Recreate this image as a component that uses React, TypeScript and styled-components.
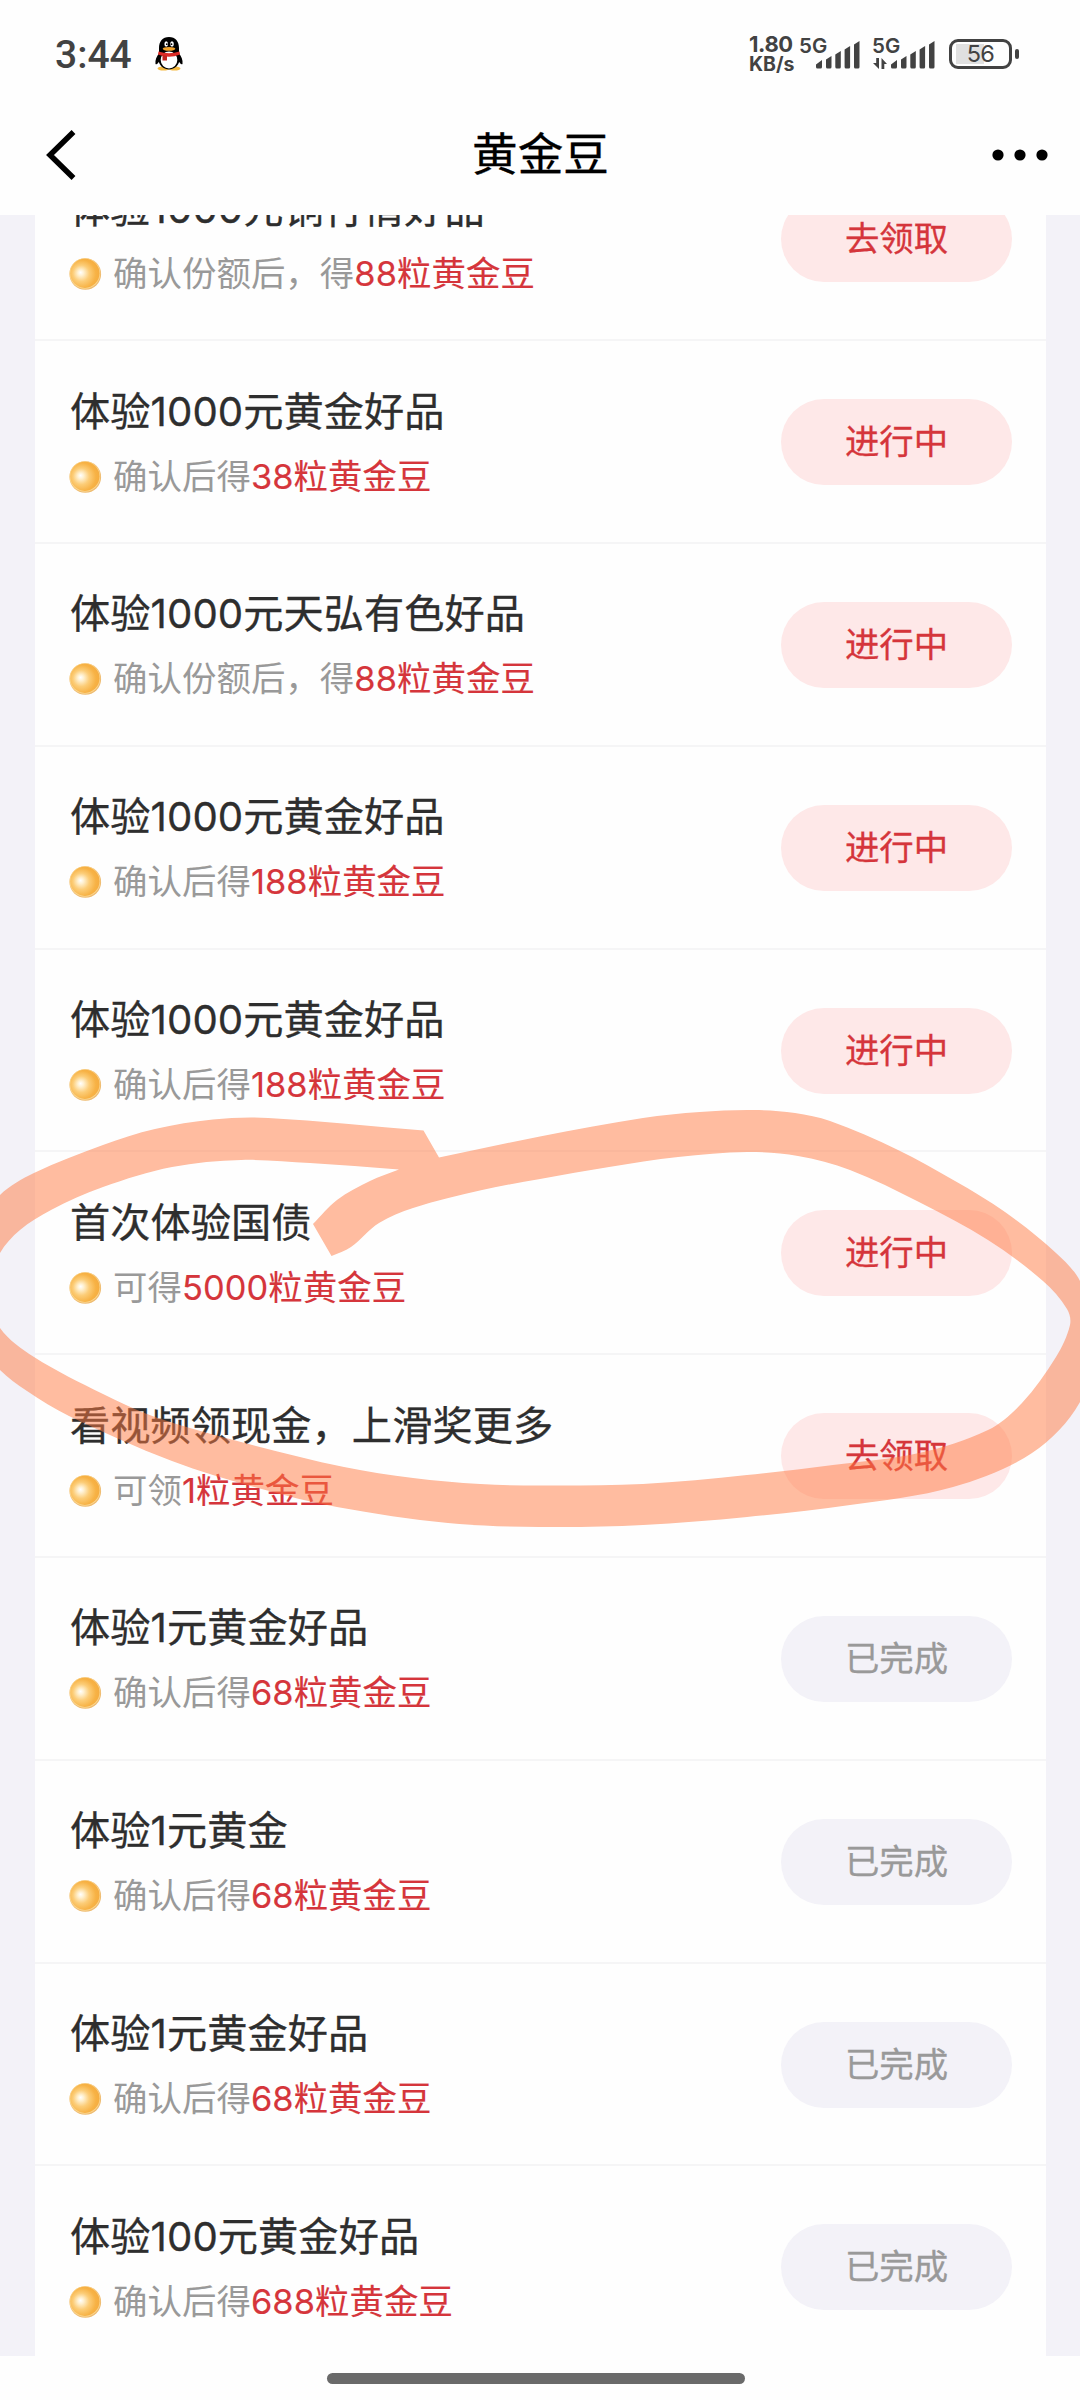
import React from 'react';
import styled, { createGlobalStyle } from 'styled-components';

type Pt = [number, number];
type Status = 'claim' | 'doing' | 'done';

interface Task {
  title: string;
  hint: string;
  reward: string;
  status: Status;
}

const tasks: Task[] = [
  { title: '体验1000元铜行情好品', hint: '确认份额后，得', reward: '88粒黄金豆', status: 'claim' },
  { title: '体验1000元黄金好品', hint: '确认后得', reward: '38粒黄金豆', status: 'doing' },
  { title: '体验1000元天弘有色好品', hint: '确认份额后，得', reward: '88粒黄金豆', status: 'doing' },
  { title: '体验1000元黄金好品', hint: '确认后得', reward: '188粒黄金豆', status: 'doing' },
  { title: '体验1000元黄金好品', hint: '确认后得', reward: '188粒黄金豆', status: 'doing' },
  { title: '首次体验国债', hint: '可得', reward: '5000粒黄金豆', status: 'doing' },
  { title: '看视频领现金，上滑奖更多', hint: '可领', reward: '1粒黄金豆', status: 'claim' },
  { title: '体验1元黄金好品', hint: '确认后得', reward: '68粒黄金豆', status: 'done' },
  { title: '体验1元黄金', hint: '确认后得', reward: '68粒黄金豆', status: 'done' },
  { title: '体验1元黄金好品', hint: '确认后得', reward: '68粒黄金豆', status: 'done' },
  { title: '体验100元黄金好品', hint: '确认后得', reward: '688粒黄金豆', status: 'done' },
];

const statusLabel: Record<Status, string> = { claim: '去领取', doing: '进行中', done: '已完成' };

const GlobalStyle = createGlobalStyle`
  * { box-sizing: border-box; }
  body {
    margin: 0;
    background: #fefefe;
    font-family: Inter, 'Noto Sans CJK SC', sans-serif;
  }
`;

const Screen = styled.div`
  position: relative;
  display: flex;
  flex-direction: column;
  width: 1080px;
  height: 2400px;
  overflow: hidden;
  background: #fefefe;
`;

const StatusBar = styled.div`
  display: flex;
  align-items: center;
  justify-content: space-between;
  height: 108px;
  padding: 0 61px 0 55px;
  color: #424242;
`;

const StatusGroup = styled.div`
  display: flex;
  align-items: center;
`;

const Clock = styled.span`
  width: 100px;
  padding-top: 1px;
  font-family: Roboto, sans-serif;
  font-size: 39px;
  font-weight: 500;
  line-height: 44px;
`;

const Speed = styled.div`
  display: flex;
  flex-direction: column;
  width: 51px;
  font-size: 19.5px;
  font-weight: 700;
  line-height: 20px;
  white-space: nowrap;
`;

const SpeedValue = styled.span`
  font-size: 22px;
  line-height: 20px;
  letter-spacing: -0.4px;
`;

const Cell = styled.div<{ $width: number }>`
  position: relative;
  width: ${(p) => p.$width}px;
  height: 36px;
`;

const CellLabel = styled.span`
  position: absolute;
  top: 0;
  left: -1px;
  font-size: 20.5px;
  font-weight: 600;
  line-height: 19px;
`;

const CellBars = styled.svg`
  position: absolute;
  left: 0;
  top: 0;
  fill: #424242;
`;

const Battery = styled.div`
  display: flex;
  align-items: center;
  justify-content: center;
  width: 63px;
  height: 30px;
  border: 3px solid #424242;
  border-radius: 9px;
  background: linear-gradient(#e0e0e0, #e0e0e0) 4px 2px / 28px 20px no-repeat;
  font-size: 23.5px;
  letter-spacing: -0.8px;
  line-height: 24px;
`;

const BatteryNub = styled.div`
  width: 4px;
  height: 10px;
  margin-left: 3px;
  border-radius: 2px;
  background: #424242;
`;

const TitleBar = styled.header`
  display: grid;
  grid-template-columns: 100px 1fr 100px;
  align-items: center;
  height: 107px;
  padding: 0 31px 14px 45px;
`;

const PageTitle = styled.h1`
  margin: 0;
  padding: 0 13px 0 0;
  color: #000;
  font-size: 45.6px;
  font-weight: 400;
  line-height: 60px;
  text-align: center;
  -webkit-text-stroke: 0.3px #000;
`;

const DotsIcon = styled.svg`
  justify-self: end;
`;

const Viewport = styled.main`
  flex: none;
  height: 2141px;
  padding: 0 34px 0 35px;
  overflow: hidden;
  background: #f3f2f8;
`;

const List = styled.div`
  margin-top: -76.5px;
  background: #fefefe;
`;

const Row = styled.div`
  display: flex;
  align-items: center;
  justify-content: space-between;
  height: 202.8px;
  padding: 1px 34px 0 34px;
  border-bottom: 2px solid #f5f5f6;
`;

const Info = styled.div`
  display: flex;
  flex-direction: column;
  gap: 13px;
`;

const TaskTitle = styled.div`
  padding-left: 1px;
  color: #2e2e2e;
  font-size: 40.2px;
  line-height: 56px;
  letter-spacing: 0.08px;
  white-space: nowrap;
  -webkit-text-stroke: 0.3px #2e2e2e;
`;

const Hint = styled.div`
  display: flex;
  align-items: center;
  color: #999;
  font-size: 34.4px;
  line-height: 48px;
  letter-spacing: 0.08px;
  white-space: nowrap;
`;

const CoinIcon = styled.svg`
  flex: none;
  margin-right: 11px;
`;

const Reward = styled.span`
  color: #d5353b;
  -webkit-text-stroke: 0.15px #d5353b;
`;

const Pill = styled.button<{ $done: boolean }>`
  width: 231px;
  height: 86px;
  padding: 0;
  border: 0;
  border-radius: 43px;
  background: ${(p) => (p.$done ? '#f3f2f8' : '#fee8e8')};
  color: ${(p) => (p.$done ? '#999' : '#d5353b')};
  font-family: inherit;
  font-size: 34.4px;
  line-height: 50px;
  -webkit-text-stroke: 0.3px currentColor;
`;

const NavArea = styled.div`
  display: flex;
  justify-content: center;
  height: 44px;
  padding-top: 17px;
`;

const HomeBar = styled.div`
  width: 418px;
  height: 11px;
  margin-right: 8px;
  border-radius: 6px;
  background: #6a6a6a;
`;

const Marker = styled.svg`
  position: absolute;
  left: 0;
  top: 0;
  pointer-events: none;
`;

/* Smooth curve through the points, as a run of cubic segments. */
function curve(points: Pt[]): string {
  const out: string[] = [];
  for (let i = 0; i < points.length - 1; i++) {
    const a = points[Math.max(0, i - 1)];
    const b = points[i];
    const c = points[i + 1];
    const d = points[Math.min(points.length - 1, i + 2)];
    const len = Math.hypot(c[0] - b[0], c[1] - b[1]);
    const t1 = Math.hypot(c[0] - a[0], c[1] - a[1]) || 1;
    const t2 = Math.hypot(d[0] - b[0], d[1] - b[1]) || 1;
    const k = len / 3;
    const x1 = b[0] + ((c[0] - a[0]) / t1) * k;
    const y1 = b[1] + ((c[1] - a[1]) / t1) * k;
    const x2 = c[0] - ((d[0] - b[0]) / t2) * k;
    const y2 = c[1] - ((d[1] - b[1]) / t2) * k;
    out.push(`C${x1.toFixed(1)} ${y1.toFixed(1)} ${x2.toFixed(1)} ${y2.toFixed(1)} ${c[0]} ${c[1]}`);
  }
  return out.join('');
}

const outerEdge: Pt[] = [
  [439, 1157.5], [540, 1136.5], [643, 1118], [700, 1112], [753, 1110], [795, 1113], [830, 1121], [898, 1150],
  [955, 1181], [1005, 1212], [1056, 1253], [1080, 1281], [1098, 1335], [1080, 1402], [1032, 1453],
  [953, 1487], [850, 1505], [747, 1517], [643, 1525], [540, 1527], [448, 1523], [337, 1507],
  [258, 1488], [172, 1461], [69, 1416], [27, 1391], [0, 1370], [-45, 1320], [-45, 1250], [0, 1195],
  [34, 1173], [103, 1145], [155, 1129], [213, 1119.5], [268, 1118], [423.5, 1130.5],
];

const innerEdge: Pt[] = [
  [399, 1169.5], [310, 1163], [241, 1160], [172, 1167], [103, 1187], [51, 1210], [20, 1230], [0, 1253],
  [-14, 1290], [0, 1328], [34, 1357], [103, 1394], [155, 1417], [241, 1442], [344, 1467], [413, 1478],
  [480, 1484], [540, 1485.5], [643, 1484], [747, 1475], [833, 1465], [919, 1453], [988, 1430],
  [1022, 1403], [1056, 1357], [1070, 1325], [1067, 1309], [1043, 1281], [988, 1240], [919, 1202],
  [850, 1170], [798, 1156], [747, 1152], [678, 1157], [609, 1167], [540, 1179], [482, 1190],
  [413, 1208], [379, 1223], [351, 1247], [331.5, 1256],
];

const tailEdge: Pt[] = [[313, 1224], [337, 1200], [370, 1181], [399, 1169.5]];

const markerPath =
  `M439 1157.5${curve(outerEdge)}Z` +
  `M399 1169.5${curve(innerEdge)}L313 1224${curve(tailEdge)}Z`;

const barPaths = (
  <>
    <path d="M0 30.5V28L6 23.5V30.5Q6 32 4.500 32H1.500Q0 32 0 30.500Z" />
    <path d="M10 23L15.500 19.500V30.500Q15.500 32 14 32H11.500Q10 32 10 30.500Z" />
    <path d="M19.300 18L24.800 14.500V30.500Q24.800 32 23.300 32H20.800Q19.300 32 19.300 30.500Z" />
    <path d="M28.600 13L34.100 9.500V30.500Q34.100 32 32.600 32H30.100Q28.600 32 28.600 30.500Z" />
    <path d="M38 8L43.500 4.500V30.500Q43.500 32 42 32H39.500Q38 32 38 30.500Z" />
  </>
);

const Penguin = () => (
  <svg width="28" height="34" viewBox="0 0 28 34">
    <ellipse cx="8.500" cy="31.500" rx="6" ry="2" fill="#f4b942" />
    <ellipse cx="19.500" cy="31.500" rx="6" ry="2" fill="#f4b942" />
    <path d="M4.500 16C1.500 19 0 23 .5 27C2 28 3.500 25.500 4.500 24ZM23.500 16C26.500 19 28 23 27.500 27C26 28 24.500 25.500 23.500 24Z" fill="#000" />
    <path d="M14 0C7.500 0 4 4.500 4 11V16C1 24 6 32.500 14 32.500S27 24 24 16V11C24 4.500 20.500 0 14 0Z" fill="#000" />
    <ellipse cx="14" cy="23" rx="8.300" ry="8.500" fill="#fff" />
    <ellipse cx="11.200" cy="7" rx="1.800" ry="2.800" fill="#fff" />
    <ellipse cx="17" cy="7" rx="1.800" ry="2.800" fill="#fff" />
    <circle cx="11.800" cy="7.200" r=".9" fill="#000" />
    <circle cx="16.500" cy="7.200" r=".9" fill="#000" />
    <ellipse cx="14" cy="11.800" rx="6.300" ry="1.900" fill="#f3a32b" />
    <path d="M3.500 14.500Q14 18 24.500 14.500L25 17.500Q14 22 3 17.500Z" fill="#dc2b26" />
    <path d="M7.500 18L12 19V23.500H7.500Z" fill="#c2241f" />
  </svg>
);

const Coin = () => (
  <CoinIcon width="33" height="32" viewBox="0 0 33 32">
    <defs>
      <radialGradient id="coinFace" cx="0.4" cy="0.54" r="0.62" fx="0.35" fy="0.47">
        <stop offset="0" stopColor="#ffffff" />
        <stop offset="0.16" stopColor="#fff1d2" />
        <stop offset="0.45" stopColor="#fccd78" />
        <stop offset="0.78" stopColor="#f7b245" />
        <stop offset="1" stopColor="#f5ac40" />
      </radialGradient>
    </defs>
    <circle cx="16.300" cy="16" r="15.800" fill="#eebb70" />
    <circle cx="15.900" cy="15.500" r="15.300" fill="#fbd68f" />
    <circle cx="15.900" cy="15.300" r="14.600" fill="url(#coinFace)" />
  </CoinIcon>
);

export default function App() {
  return (
    <Screen>
      <GlobalStyle />
      <StatusBar>
        <StatusGroup>
          <Clock>3:44</Clock>
          <Penguin />
        </StatusGroup>
        <StatusGroup>
          <Speed>
            <SpeedValue>1.80</SpeedValue>
            <span>KB/s</span>
          </Speed>
          <Cell $width={73}>
            <CellLabel>5G</CellLabel>
            <CellBars width="62" height="36" viewBox="0 0 62 36">
              <g transform="translate(16 0.500)">{barPaths}</g>
            </CellBars>
          </Cell>
          <Cell $width={76}>
            <CellLabel>5G</CellLabel>
            <CellBars width="64" height="36" viewBox="0 0 64 36">
              <g transform="translate(18 0.500)">{barPaths}</g>
              <path d="M3.200 22H6V33L0 27H3.200ZM8.500 33V22L14 28H11.300V33Z" />
            </CellBars>
          </Cell>
          <Battery>56</Battery>
          <BatteryNub />
        </StatusGroup>
      </StatusBar>
      <TitleBar>
        <svg width="34" height="52" viewBox="0 0 34 52">
          <path d="M28.500 3L5 26L28.500 49" fill="none" stroke="#000" strokeWidth="5.500" />
        </svg>
        <PageTitle>黄金豆</PageTitle>
        <DotsIcon width="58" height="14" viewBox="0 0 58 14">
          <circle cx="7" cy="7" r="5.600" />
          <circle cx="29" cy="7" r="5.600" />
          <circle cx="51" cy="7" r="5.600" />
        </DotsIcon>
      </TitleBar>
      <Viewport>
        <List>
          {tasks.map((task, i) => (
            <Row key={i}>
              <Info>
                <TaskTitle>{task.title}</TaskTitle>
                <Hint>
                  <Coin />
                  {task.hint}
                  <Reward>{task.reward}</Reward>
                </Hint>
              </Info>
              <Pill $done={task.status === 'done'}>{statusLabel[task.status]}</Pill>
            </Row>
          ))}
        </List>
      </Viewport>
      <NavArea>
        <HomeBar />
      </NavArea>
      <Marker width="1080" height="2400" viewBox="0 0 1080 2400">
        <path d={markerPath} fill="rgba(255, 121, 65, 0.5)" fillRule="evenodd" />
      </Marker>
    </Screen>
  );
}
